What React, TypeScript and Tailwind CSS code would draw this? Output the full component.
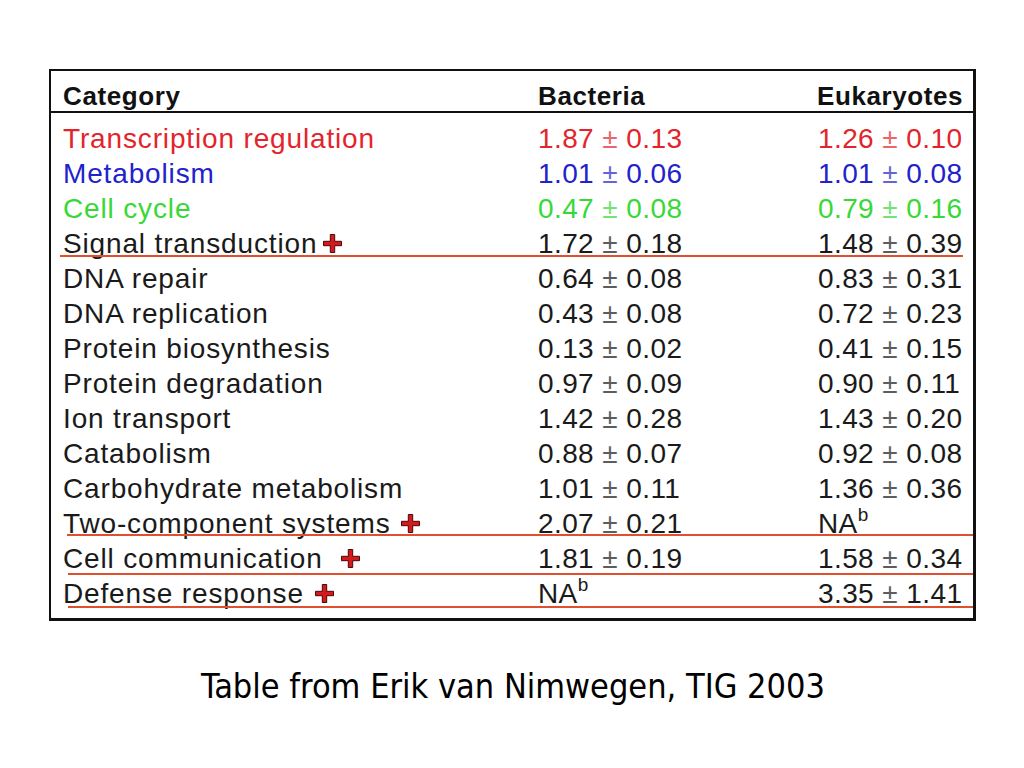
import React from "react";

type Row = {
  name: string;
  b: React.ReactNode;
  e: React.ReactNode;
  color?: string;
  plus?: string;
  line?: { top: number; left: number; width: number };
};

const Plus = () => (
  <svg width="21" height="21" viewBox="0 0 21 21" className="inline-block">
    <path
      d="M8.3 1.5h4.4v6.8h6.8v4.4h-6.8v6.8H8.3v-6.8H1.5V8.3h6.8z"
      fill="#d41a1a"
      stroke="#4a0808"
      strokeWidth="1"
    />
  </svg>
);

const Val = ({ a, b }: { a: string; b: string }) => (
  <span className="tracking-[0.4px]">
    {a} <span className="opacity-70">±</span> {b}
  </span>
);

const NA = () => (
  <span className="tracking-[0.4px]">
    NA<span className="inline-block align-top text-[19px] relative -top-[5px]">b</span>
  </span>
);

const rows: Row[] = [
  { name: "Transcription regulation", b: <Val a="1.87" b="0.13" />, e: <Val a="1.26" b="0.10" />, color: "text-[#e3242b]" },
  { name: "Metabolism", b: <Val a="1.01" b="0.06" />, e: <Val a="1.01" b="0.08" />, color: "text-[#2222cc]" },
  { name: "Cell cycle", b: <Val a="0.47" b="0.08" />, e: <Val a="0.79" b="0.16" />, color: "text-[#38d838]" },
  { name: "Signal transduction", b: <Val a="1.72" b="0.18" />, e: <Val a="1.48" b="0.39" />, plus: "ml-[5px]", line: { top: 29, left: 9, width: 903 } },
  { name: "DNA repair", b: <Val a="0.64" b="0.08" />, e: <Val a="0.83" b="0.31" /> },
  { name: "DNA replication", b: <Val a="0.43" b="0.08" />, e: <Val a="0.72" b="0.23" /> },
  { name: "Protein biosynthesis", b: <Val a="0.13" b="0.02" />, e: <Val a="0.41" b="0.15" /> },
  { name: "Protein degradation", b: <Val a="0.97" b="0.09" />, e: <Val a="0.90" b="0.11" /> },
  { name: "Ion transport", b: <Val a="1.42" b="0.28" />, e: <Val a="1.43" b="0.20" /> },
  { name: "Catabolism", b: <Val a="0.88" b="0.07" />, e: <Val a="0.92" b="0.08" /> },
  { name: "Carbohydrate metabolism", b: <Val a="1.01" b="0.11" />, e: <Val a="1.36" b="0.36" /> },
  { name: "Two-component systems", b: <Val a="2.07" b="0.21" />, e: <NA />, plus: "ml-[9px]", line: { top: 28, left: 16, width: 906 } },
  { name: "Cell communication", b: <Val a="1.81" b="0.19" />, e: <Val a="1.58" b="0.34" />, plus: "ml-[17px]", line: { top: 32, left: 17, width: 905 } },
  { name: "Defense response", b: <NA />, e: <Val a="3.35" b="1.41" />, plus: "ml-[10px]", line: { top: 30, left: 17, width: 905 } },
];

export default function App() {
  return (
    <div className="w-[1024px] h-[768px] bg-white relative overflow-hidden" style={{ fontFamily: '"Liberation Sans", Arial, sans-serif' }}>
      <div className="pt-[69px] pl-[49px]">
        <div className="w-[927px] h-[552px] border-2 border-[#111] border-r-[3px] border-b-[3px] flex flex-col">
          <div className="h-[40px] flex items-end pb-[2px] pl-[12px] font-bold text-[26px] text-[#111] leading-none tracking-[0.6px]">
            <div className="w-[475px]">Category</div>
            <div className="w-[279px]">Bacteria</div>
            <div className="flex-1">Eukaryotes</div>
          </div>
          <div className="h-[2px] bg-[#111]" />
          <div className="pt-[8px] flex flex-col">
            {rows.map((r) => (
              <div key={r.name} className={`relative h-[35px] flex items-center pl-[12px] text-[28px] leading-none ${r.color ?? "text-[#1a1a1a]"}`}>
                <div className="w-[475px] flex items-center">
                  <span className="tracking-[0.85px]">{r.name}</span>
                  {r.plus && (
                    <span className={`${r.plus} flex items-center`}>
                      <Plus />
                    </span>
                  )}
                </div>
                <div className="w-[280px]">{r.b}</div>
                <div className="flex-1">{r.e}</div>
                {r.line && (
                  <div
                    className="absolute h-[1.5px] bg-[#e0502e]"
                    style={{ top: r.line.top, left: r.line.left, width: r.line.width }}
                  />
                )}
              </div>
            ))}
          </div>
        </div>
      </div>
      <div
        className="mt-[48px] text-center text-[34px] text-black leading-none pl-[2px]"
        style={{ fontFamily: '"DejaVu Sans Condensed", "DejaVu Sans", sans-serif' }}
      >
        Table from Erik van Nimwegen, TIG 2003
      </div>
    </div>
  );
}
